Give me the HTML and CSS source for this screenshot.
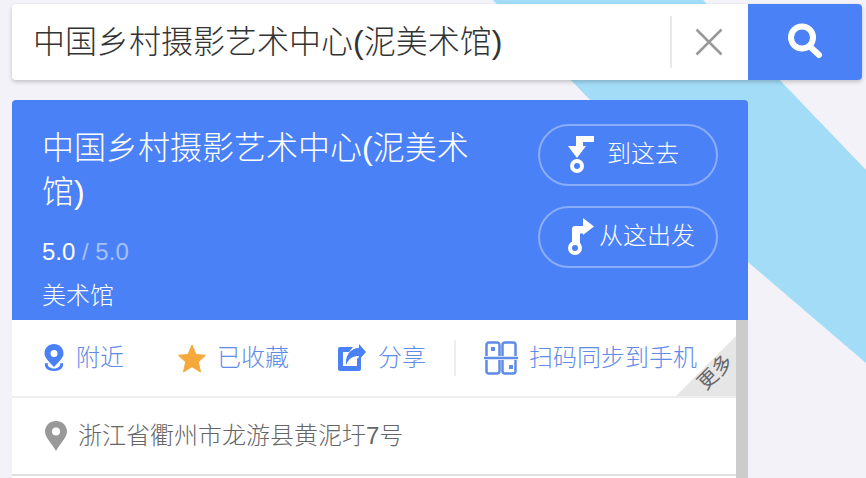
FILE: index.html
```html
<!DOCTYPE html>
<html>
<head>
	<meta charset="utf-8">
	<title>中国乡村摄影艺术中心(泥美术馆)</title>
	<link rel="stylesheet" href="styles.css">
</head>
<body>
	<svg class="map-road" width="866" height="478" viewBox="0 0 866 478">
		<polygon points="493,0 703,0 866,170 866,363 748,262"></polygon>
	</svg>
	<div class="search-wrap">
		<div class="search-box">
			<span class="search-text">中国乡村摄影艺术中心(泥美术馆)</span>
			<span class="search-clear">
				<svg width="28" height="28" viewBox="0 0 28 28"><path d="M1.500 1.500 L26.500 26.500 M26.500 1.500 L1.500 26.500"></path></svg>
			</span>
		</div>
		<div class="search-btn">
			<svg width="40" height="40" viewBox="0 0 40 40"><circle cx="17" cy="15.500" r="11"></circle><path d="M26 25.500 L34 33"></path></svg>
		</div>
	</div>
	<div class="place-card">
		<div class="place-head">
			<div class="place-info">
				<h2 class="place-name">中国乡村摄影艺术中心(泥美术馆)</h2>
				<div class="place-rate">5.0 <span class="place-rate_total">/ 5.0</span></div>
				<div class="place-type">美术馆</div>
			</div>
			<div class="route-wrap">
				<div class="route-btn route-btn_to">
					<svg width="28" height="40" viewBox="0 0 28 40">
						<path class="route-solid" d="M8 1 H26 V7 H15 V11 H18 L9 23 L0 11 H8 Z"></path>
						<circle class="route-ring" cx="9" cy="31" r="5"></circle>
					</svg>
					<span>到这去</span>
				</div>
				<div class="route-btn route-btn_from">
					<svg width="28" height="40" viewBox="0 0 28 40">
						<path class="route-solid" d="M5 26 V12 Q5 9 8 9 H16 V1 L27 9.500 L16 18 V16.500 H13 V26 Z"></path>
						<circle class="route-ring" cx="8" cy="31" r="5"></circle>
					</svg>
					<span>从这出发</span>
				</div>
			</div>
		</div>
		<div class="place-body">
			<div class="place-content">
				<div class="tools-row">
					<div class="tool-item tool-item_near">
						<svg width="20" height="28" viewBox="0 0 20 28">
							<path class="icon-blue" fill-rule="evenodd" d="M10 0 C4.500 0 .500 4 .500 9.500 C.500 14 5.500 18 10 23 C14.500 18 19.500 14 19.500 9.500 C19.500 4 15.500 0 10 0 Z M10 6 A3.500 3.500 0 1 1 10 13 A3.500 3.500 0 0 1 10 6 Z"></path>
							<path class="icon-blue" d="M1 19 C0 24 4 27 10 27 C16 27 20 24 19 19 L16 19.500 C17 22 14 24.500 10 24.500 C6 24.500 3 22 4 19.500 Z"></path>
						</svg>
						<span>附近</span>
					</div>
					<div class="tool-item tool-item_fav">
						<svg width="28" height="29" viewBox="0 0 28 29">
							<path class="icon-star" d="M14 1 L18 10.500 L27.500 11.300 L20.300 18 L22.500 28 L14 22.700 L5.500 28 L7.700 18 L.500 11.300 L10 10.500 Z"></path>
						</svg>
						<span>已收藏</span>
					</div>
					<div class="tool-item tool-item_share">
						<svg width="28" height="28" viewBox="0 0 28 28">
							<path class="icon-blue" d="M2 3 H15 L11 8 H5 V22 H19 V15 L23 11 V25 A2 2 0 0 1 21 27 H2 A2 2 0 0 1 0 25 V5 A2 2 0 0 1 2 3 Z"></path>
							<path class="icon-blue" d="M21 0 L28 8 L21 16 V12 C15 12 11 14 8 21 C7 12 12 4 21 4 Z"></path>
						</svg>
						<span>分享</span>
					</div>
					<div class="tool-item tool-item_qr">
						<svg width="34" height="34" viewBox="0 0 34 34">
							<path class="qr-line" d="M2.500 15 V4 A2.500 2.500 0 0 1 5 1.500 H13 A2.500 2.500 0 0 1 15.500 4 V15 M18.500 15 V4 A2.500 2.500 0 0 1 21 1.500 H29 A2.500 2.500 0 0 1 31.500 4 V15 M0 17 H34 M2.500 19 V30 A2.500 2.500 0 0 0 5 32.500 H13 A2.500 2.500 0 0 0 15.500 30 V19 M18.500 19 V30 A2.500 2.500 0 0 0 21 32.500 H29 A2.500 2.500 0 0 0 31.500 30 V19"></path>
							<rect class="qr-dot" x="7" y="6" width="4" height="4"></rect>
							<rect class="qr-dot" x="25" y="24" width="4" height="4"></rect>
						</svg>
						<span>扫码同步到手机</span>
					</div>
					<div class="more-corner"><span class="more-corner_text">更多</span></div>
				</div>
				<div class="address-row">
					<svg width="22" height="30" viewBox="0 0 22 30">
						<path class="icon-gray" fill-rule="evenodd" d="M11 0 C4.500 0 0 4.800 0 10.500 C0 17 7.500 23 11 30 C14.500 23 22 17 22 10.500 C22 4.800 17.500 0 11 0 Z M11 6.500 A4 4 0 1 1 11 14.500 A4 4 0 0 1 11 6.500 Z"></path>
					</svg>
					<span>浙江省衢州市龙游县黄泥圩7号</span>
				</div>
			</div>
			<div class="scroll-bar"></div>
		</div>
	</div>
</body>
</html>
```

FILE: styles.css
```css
* {
	margin: 0;
	padding: 0;
	box-sizing: border-box;
}
html,
body {
	height: 478px;
	overflow: hidden;
}
body {
	padding: 4px 0 0 12px;
	font-family: "Liberation Sans", "Noto Sans CJK SC", sans-serif;
	font-weight: 300;
	background-color: #f2f2f8;
}
svg {
	display: block;
	flex-shrink: 0;
}
.map-road {
	position: absolute;
	top: 0;
	left: 0;
}
.map-road polygon {
	fill: #a3dcf7;
}
.search-wrap {
	position: relative;
	display: flex;
	width: 850px;
	height: 76px;
	border-radius: 4px;
	box-shadow: 0 2px 4px rgba(0, 0, 0, 0.2);
}
.search-box {
	display: flex;
	justify-content: space-between;
	align-items: center;
	width: 736px;
	padding-left: 21px;
	border-radius: 4px 0 0 4px;
	background-color: #fff;
}
.search-text {
	font-size: 32px;
	line-height: 44px;
	color: #333;
}
.search-clear {
	display: flex;
	align-items: center;
	width: 78px;
	height: 52px;
	padding-left: 23px;
	border-left: 2px solid #e8e8e8;
}
.search-clear path {
	fill: none;
	stroke: #999;
	stroke-width: 2.500;
}
.search-btn {
	display: flex;
	justify-content: center;
	align-items: center;
	width: 114px;
	border-radius: 0 4px 4px 0;
	background-color: #4a81f6;
}
.search-btn circle,
.search-btn path {
	fill: none;
	stroke: #fff;
	stroke-width: 6;
	stroke-linecap: round;
}
.place-card {
	position: relative;
	width: 736px;
	margin-top: 20px;
}
.place-head {
	display: flex;
	justify-content: space-between;
	height: 220px;
	padding: 24px 30px 0;
	border-radius: 4px 4px 0 0;
	color: #fff;
	background-color: #4a81f6;
}
.place-info {
	width: 440px;
}
.place-name {
	margin-top: 2px;
	font-size: 32px;
	font-weight: 300;
	line-height: 44px;
}
.place-rate {
	margin-top: 21px;
	font-size: 24px;
	line-height: 34px;
}
.place-rate_total {
	color: rgba(255, 255, 255, 0.5);
}
.place-type {
	margin-top: 10px;
	font-size: 24px;
	line-height: 34px;
}
.route-wrap {
	display: flex;
	flex-direction: column;
	gap: 20px;
}
.route-btn {
	display: flex;
	align-items: center;
	width: 180px;
	height: 62px;
	border: 2px solid rgba(255, 255, 255, 0.35);
	border-radius: 31px;
	font-size: 24px;
	line-height: 32px;
}
.route-btn span {
	padding-bottom: 2px;
}
.route-btn_to {
	gap: 11px;
	padding-left: 28px;
}
.route-btn_from {
	gap: 4px;
	padding-left: 27px;
}
.route-solid {
	fill: #fff;
}
.route-ring {
	fill: none;
	stroke: #fff;
	stroke-width: 4;
}
.place-body {
	display: flex;
	height: 160px;
}
.place-content {
	flex: 1;
	background-color: #fff;
}
.scroll-bar {
	width: 12px;
	background-color: #ccc;
}
.tools-row {
	position: relative;
	display: flex;
	align-items: center;
	height: 78px;
	padding-left: 32px;
	border-bottom: 2px solid #eee;
	font-size: 24px;
	line-height: 34px;
	color: #628be6;
}
.tool-item {
	display: flex;
	align-items: center;
	gap: 12px;
}
.tool-item_near {
	width: 134px;
}
.tool-item_fav {
	gap: 11px;
	width: 160px;
}
.tool-item_share {
	width: 118px;
	height: 36px;
	border-right: 2px solid #eee;
}
.tool-item_qr {
	gap: 11px;
	padding-left: 28px;
}
.icon-blue {
	fill: #4a81f6;
}
.icon-star {
	fill: #f5a93b;
	stroke: #f5a93b;
	stroke-width: 1;
	stroke-linejoin: round;
}
.icon-gray {
	fill: #999;
}
.qr-line {
	fill: none;
	stroke: #5f8be8;
	stroke-width: 2.500;
}
.qr-dot {
	fill: #5f8be8;
}
.more-corner {
	position: absolute;
	right: 0;
	bottom: 0;
	width: 60px;
	height: 60px;
	background-color: #e6e6e6;
	clip-path: polygon(100% 0, 100% 100%, 0 100%);
}
.more-corner_text {
	position: absolute;
	top: 24px;
	left: 19px;
	font-size: 20px;
	font-weight: 400;
	line-height: 24px;
	color: #666;
	transform: rotate(-45deg);
}
.address-row {
	display: flex;
	align-items: center;
	gap: 11px;
	height: 78px;
	padding-left: 33px;
	border-bottom: 2px solid #e0e0e0;
	font-size: 24px;
	line-height: 34px;
	color: #666;
}
```
